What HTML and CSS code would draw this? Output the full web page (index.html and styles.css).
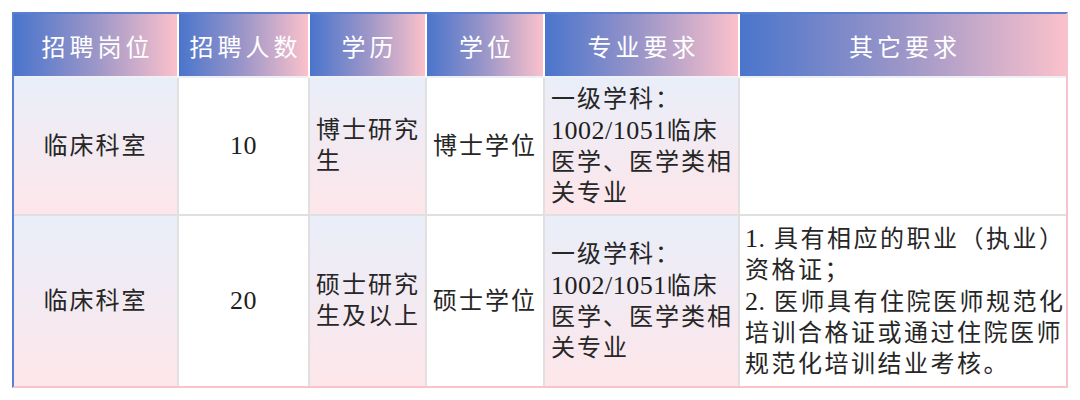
FILE: index.html
```html
<!DOCTYPE html>
<html lang="zh-CN">
<head>
<meta charset="utf-8">
<title>招聘岗位</title>
<link rel="stylesheet" href="styles.css">
</head>
<body>
<div class="table">
  <div class="th">招聘岗位</div>
  <div class="th">招聘人数</div>
  <div class="th">学历</div>
  <div class="th">学位</div>
  <div class="th">专业要求</div>
  <div class="th last">其它要求</div>

  <div class="td tint center"><p class="txt">临床科室</p></div>
  <div class="td center"><p class="txt"><span class="num">10</span></p></div>
  <div class="td tint left"><p class="txt">博士研究<br>生</p></div>
  <div class="td center"><p class="txt">博士学位</p></div>
  <div class="td tint left"><p class="txt">一级学科：<br><span class="num">1002/1051</span>临床<br>医学、医学类相<br>关专业</p></div>
  <div class="td left last"></div>

  <div class="td tint center bottom"><p class="txt">临床科室</p></div>
  <div class="td center bottom"><p class="txt"><span class="num">20</span></p></div>
  <div class="td tint left bottom"><p class="txt">硕士研究<br>生及以上</p></div>
  <div class="td center bottom"><p class="txt">硕士学位</p></div>
  <div class="td tint left bottom"><p class="txt">一级学科：<br><span class="num">1002/1051</span>临床<br>医学、医学类相<br>关专业</p></div>
  <div class="td left last bottom wide"><p class="txt"><span class="num">1.</span> 具有相应的职业（执业）<br>资格证；<br><span class="num">2.</span> 医师具有住院医师规范化<br>培训合格证或通过住院医师<br>规范化培训结业考核。</p></div>
</div>
</body>
</html>
```

FILE: styles.css
```css
html, body {
  margin: 0;
  padding: 0;
  background: #ffffff;
}

.table {
  margin: 12px 0 0 12px;
  width: 1056px;
  box-sizing: border-box;
  border-top: 2px solid #5a7ed2;
  border-left: 2px solid #5a7ed2;
  border-right: 2px solid #f9c2cc;
  border-bottom: 2px solid #f9c2cc;
  display: grid;
  grid-template-columns: 165px 131px 117px 118px 195px 326px;
  grid-template-rows: 64px 138px 170px;
  font-family: "Liberation Serif", "Noto Sans CJK SC", serif;
  color: #262626;
}

.th {
  display: flex;
  align-items: center;
  justify-content: center;
  background: linear-gradient(to right, #4a75cc 0%, #9c96c8 50%, #fbc1cb 100%);
  color: #ffffff;
  font-size: 24px;
  letter-spacing: 4px;
  text-indent: 4px;
  border-right: 2px solid #ffffff;
  border-bottom: 2px solid #eef0f5;
  box-sizing: border-box;
}

.td {
  display: flex;
  align-items: center;
  font-size: 24px;
  line-height: 31px;
  letter-spacing: 2px;
  white-space: nowrap;
  background: #ffffff;
  border-right: 2px solid #e0e0e0;
  border-bottom: 2px solid #e0e0e0;
  box-sizing: border-box;
}

.txt {
  margin: 0;
}

.num {
  font-size: 26px;
  letter-spacing: 0.5px;
  color: #1e1e1e;
}

.tint {
  background: linear-gradient(to bottom, #e9eef9 0%, #fde6ea 100%);
}

.center {
  justify-content: center;
  text-align: center;
}

.left {
  justify-content: flex-start;
  padding-left: 6px;
}

.last {
  border-right: none;
}

.bottom {
  border-bottom: none;
}

.wide {
  padding-left: 5px;
  letter-spacing: 2.5px;
}
```
